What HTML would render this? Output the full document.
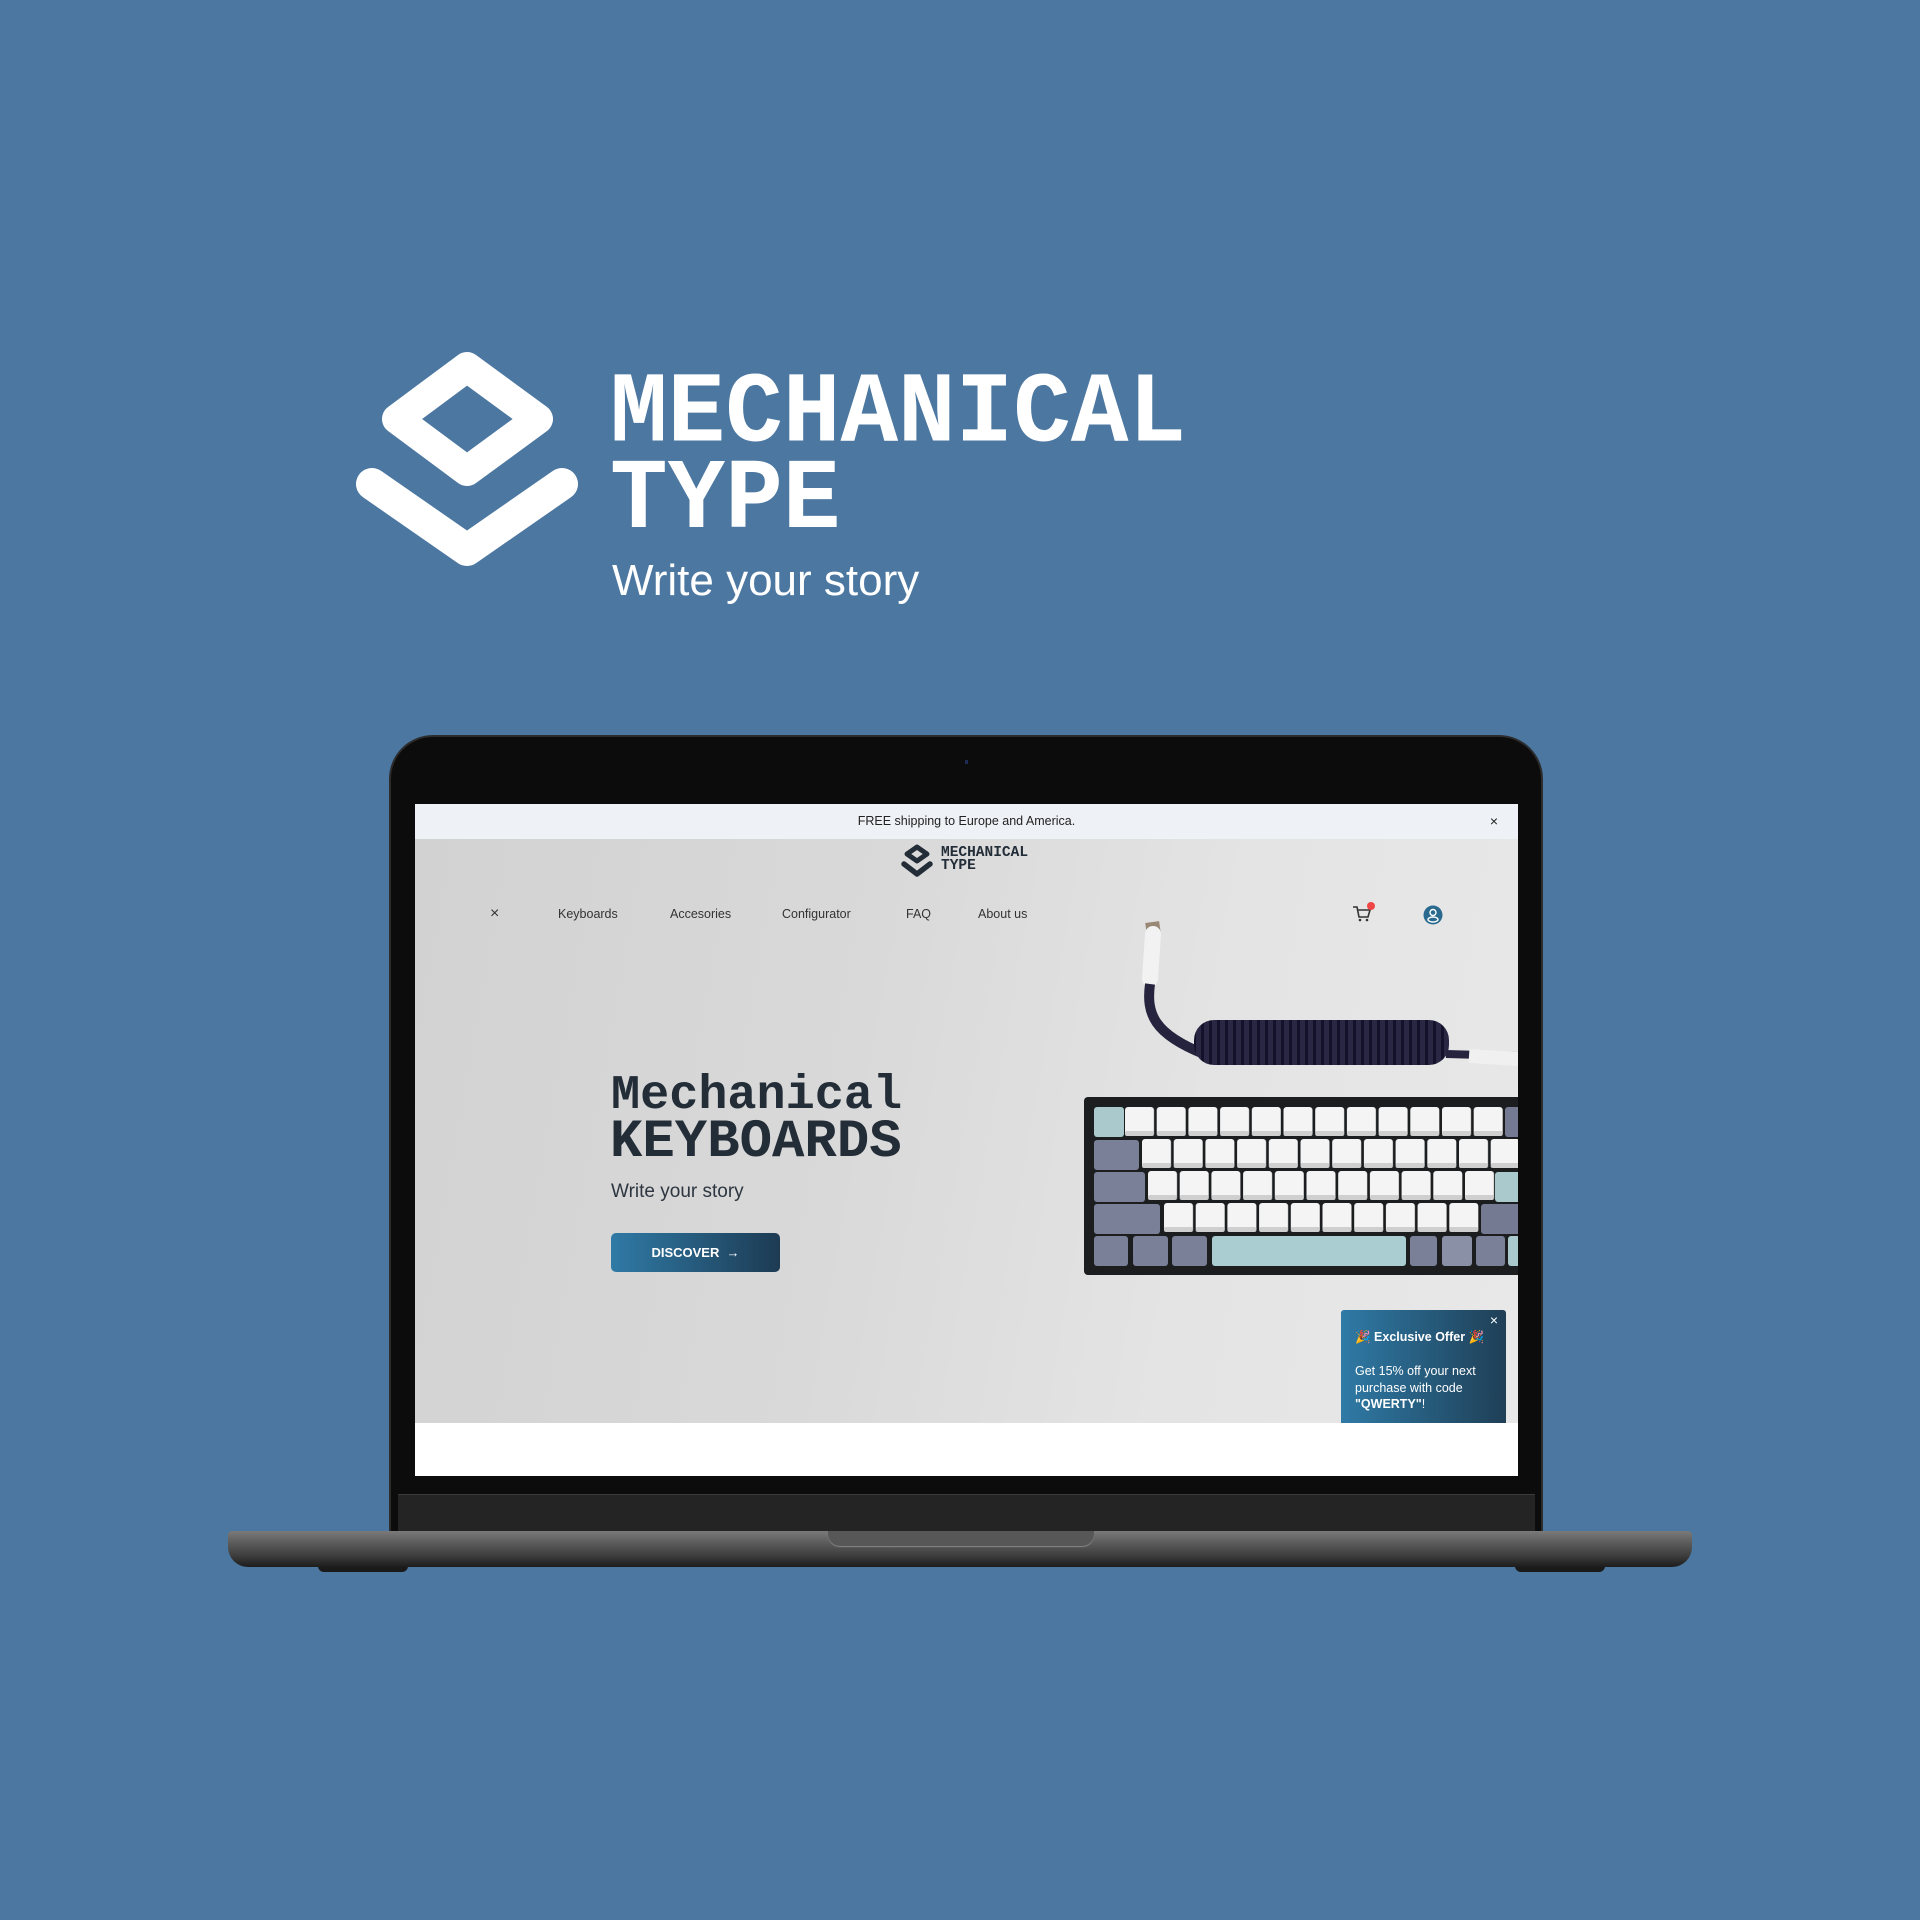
<!DOCTYPE html>
<html><head><meta charset="utf-8"><style>
*{margin:0;padding:0;box-sizing:border-box}
body{width:1920px;height:1920px;background:#4b77a1;position:relative;overflow:hidden;font-family:"Liberation Sans",sans-serif}
.a{position:absolute}
.mono{font-family:"Liberation Mono",monospace;font-weight:bold}
</style></head><body>
<svg class="a" style="left:0;top:0" width="1920" height="700">
<path d="M467 367 L538 419 L467 471 L397 419 Z" fill="none" stroke="#fff" stroke-width="30" stroke-linejoin="round"/>
<path d="M372 484 L467 550 L562 484" fill="none" stroke="#fff" stroke-width="32" stroke-linecap="round" stroke-linejoin="round"/>
</svg>
<div class="a mono" style="left:610px;top:371px;font-size:96px;line-height:83px;color:#fff;transform:scaleY(1.04);transform-origin:0 0">MECHANICAL<br>TYPE</div>
<div class="a" style="left:612px;top:556px;font-size:44px;color:#fff">Write your story</div>

<!-- laptop base -->
<div class="a" style="left:318px;top:1560px;width:90px;height:12px;background:#1a1a1a;border-radius:0 0 6px 6px"></div>
<div class="a" style="left:1515px;top:1560px;width:90px;height:12px;background:#1a1a1a;border-radius:0 0 6px 6px"></div>
<div class="a" style="left:228px;top:1531px;width:1464px;height:36px;border-radius:4px 4px 20px 20px;background:linear-gradient(#7a7a7a,#5e5e5e 30%,#3c3c3c 70%,#1c1c1c)"></div>
<div class="a" style="left:828px;top:1531px;width:266px;height:15px;background:#575757;border-radius:0 0 12px 12px;box-shadow:0 1px 1px #888"></div>
<!-- lid -->
<div class="a" style="left:389px;top:735px;width:1154px;height:796px;background:#0c0c0c;border:2px solid #2c2c2c;border-bottom:none;border-radius:44px 44px 0 0"></div>
<div class="a" style="left:398px;top:1494px;width:1137px;height:37px;background:#242424;border-top:1px solid #3a3a3a"></div>
<div class="a" style="left:965px;top:760px;width:3px;height:4px;background:#1f2a55"></div>
<!-- screen -->
<div class="a" style="left:415px;top:804px;width:1103px;height:672px;background:#fff;overflow:hidden">
 <div class="a" style="left:0;top:0;width:1103px;height:35px;background:#eef1f5;font-size:12.5px;color:#222;text-align:center;line-height:34px">FREE shipping to Europe and America.<span class="a" style="right:20px;top:0;font-size:14px">×</span></div>
 <div class="a" style="left:0;top:35px;width:1103px;height:584px;background:linear-gradient(100deg,#d2d2d2 0%,#d9d9d9 40%,#e4e4e4 70%,#e8e8e8 100%)"></div>
 <!-- small logo -->
 <svg class="a" style="left:485px;top:38px" width="40" height="40"><path d="M17 5 L27 12 L17 19 L7 12 Z" fill="none" stroke="#232d38" stroke-width="5" stroke-linejoin="round"/><path d="M4 22 L17 32 L30 22" fill="none" stroke="#232d38" stroke-width="5.5" stroke-linecap="round" stroke-linejoin="round"/></svg>
 <div class="a mono" style="left:526px;top:43px;font-size:14.5px;line-height:13px;color:#232d38">MECHANICAL<br>TYPE</div>
 <!-- nav -->
 <div class="a" style="left:75px;top:101px;font-size:16px;color:#333">×</div>
 <div class="a" style="top:103px;left:143px;font-size:12.5px;color:#333">Keyboards</div>
 <div class="a" style="top:103px;left:255px;font-size:12.5px;color:#333">Accesories</div>
 <div class="a" style="top:103px;left:367px;font-size:12.5px;color:#333">Configurator</div>
 <div class="a" style="top:103px;left:491px;font-size:12.5px;color:#333">FAQ</div>
 <div class="a" style="top:103px;left:563px;font-size:12.5px;color:#333">About us</div>
 <svg class="a" style="left:935px;top:98px" width="30" height="24"><path d="M3 5 H7 L9 15 H18 L20 8 H8" fill="none" stroke="#333" stroke-width="1.6"/><circle cx="10" cy="18" r="1.3" fill="#333"/><circle cx="17" cy="18" r="1.3" fill="#333"/><circle cx="21" cy="4" r="4" fill="#f04545"/></svg>
 <svg class="a" style="left:1008px;top:101px" width="20" height="20"><circle cx="10" cy="10" r="9.5" fill="#2a6a8f"/><circle cx="10" cy="7.5" r="3" fill="none" stroke="#fff" stroke-width="1.4"/><ellipse cx="10" cy="14.5" rx="5" ry="2.5" fill="none" stroke="#fff" stroke-width="1.4"/></svg>
 <!-- hero -->
 <div class="a mono" style="left:196px;top:267px;font-size:48.5px;line-height:50px;color:#232d38">Mechanical</div>
 <div class="a mono" style="left:195px;top:311px;font-size:54px;line-height:56px;color:#232d38">KEYBOARDS</div>
 <div class="a" style="left:196px;top:377px;font-size:19px;color:#2d3640">Write your story</div>
 <div class="a" style="left:196px;top:429px;width:169px;height:39px;border-radius:5px;background:linear-gradient(90deg,#2f7aa6,#1d3b53);color:#fff;font-size:13px;font-weight:bold;text-align:center;line-height:39px">DISCOVER &nbsp;→</div>
 <!-- cable & keyboard -->
 <svg class="a" style="left:669px;top:100px" width="434" height="380">
  <defs>
   <pattern id="k" x="0" y="0" width="31.7" height="32" patternUnits="userSpaceOnUse"><rect x="1" y="1" width="29" height="29" rx="3" fill="#f4f4f4"/><rect x="1" y="25" width="29" height="5" rx="2" fill="#cfcfcf"/></pattern>
   <pattern id="c" x="0" y="0" width="8" height="10" patternUnits="userSpaceOnUse"><rect width="8" height="10" fill="#2a2744"/><rect x="5" width="3" height="10" fill="#14122a"/></pattern>
  </defs>
  <rect x="62" y="18" width="14" height="12" fill="#9a8877" transform="rotate(-8 69 24)"/>
  <path d="M69 30 L66 75" stroke="#f2f2f2" stroke-width="16" stroke-linecap="round"/>
  <path d="M66 80 C62 110 70 130 120 150" fill="none" stroke="#26233f" stroke-width="10"/>
  <rect x="110" y="116" width="255" height="45" rx="20" fill="url(#c)"/>
  <path d="M362 150 L434 152" stroke="#26233f" stroke-width="8"/>
  <path d="M385 152 L434 155" stroke="#f0f0f0" stroke-width="14"/>
  <rect x="0" y="193" width="440" height="178" rx="4" fill="#1b1d1f"/>
  <rect x="10" y="203" width="30" height="30" rx="3" fill="#a9c9cc"/>
  <g transform="translate(40,202)"><rect width="380" height="32" fill="url(#k)"/></g>
  <rect x="421" y="203" width="20" height="30" rx="3" fill="#737a92"/>
  <rect x="10" y="236" width="45" height="30" rx="3" fill="#7a8098"/>
  <g transform="translate(57,234)"><rect width="380" height="32" fill="url(#k)"/></g>
  <rect x="10" y="268" width="51" height="30" rx="3" fill="#7a8098"/>
  <g transform="translate(63,266)"><rect width="348" height="32" fill="url(#k)"/></g>
  <rect x="411" y="268" width="30" height="30" rx="3" fill="#a9c9cc"/>
  <rect x="10" y="300" width="66" height="30" rx="3" fill="#7a8098"/>
  <g transform="translate(79,298)"><rect width="317" height="32" fill="url(#k)"/></g>
  <rect x="397" y="300" width="40" height="30" rx="3" fill="#737a92"/>
  <rect x="10" y="332" width="34" height="30" rx="3" fill="#7a8098"/>
  <rect x="49" y="332" width="35" height="30" rx="3" fill="#7a8098"/>
  <rect x="88" y="332" width="35" height="30" rx="3" fill="#7a8098"/>
  <rect x="128" y="332" width="194" height="30" rx="3" fill="#a9cdd0"/>
  <rect x="326" y="332" width="27" height="30" rx="3" fill="#7a8098"/>
  <rect x="358" y="332" width="30" height="30" rx="3" fill="#8a90a6"/>
  <rect x="392" y="332" width="29" height="30" rx="3" fill="#7a8098"/>
  <rect x="424" y="332" width="12" height="30" rx="3" fill="#a9c9cc"/>
 </svg>
 <!-- popup -->
 <div class="a" style="left:926px;top:506px;width:165px;height:113px;background:linear-gradient(90deg,#2f7aa6,#1f3f56);border-radius:3px 3px 0 0;color:#fff;font-size:12.5px">
  <div class="a" style="right:8px;top:2px;font-size:14px">×</div>
  <div class="a" style="left:14px;top:20px;font-weight:bold">🎉 Exclusive Offer 🎉</div>
  <div class="a" style="left:14px;top:53px;line-height:16.5px">Get 15% off your next<br>purchase with code<br><b>"QWERTY"</b>!</div>
 </div>
</div>
</body></html>
